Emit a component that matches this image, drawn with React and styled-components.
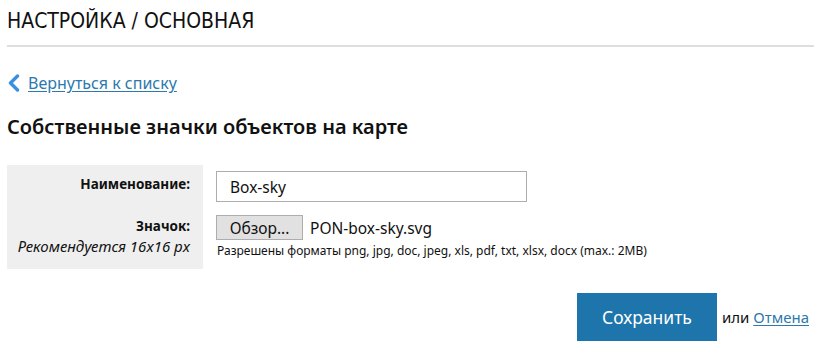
import React from "react";
import styled, { createGlobalStyle } from "styled-components";

const Global = createGlobalStyle`
  html, body { margin: 0; padding: 0; background: #fff; }
  body { font-family: "Noto Sans", "Open Sans", sans-serif; color: #111; }
`;

const Page = styled.div`
  padding: 0 1px 0 7px;
  width: 815px;
  box-sizing: border-box;
`;

const Title = styled.h1`
  margin: 0;
  padding-top: 8px;
  box-sizing: border-box;
  font-family: "Liberation Sans Narrow", "DejaVu Sans Condensed", "Liberation Sans", sans-serif;
  font-stretch: condensed;
  font-weight: 400;
  font-size: 21px;
  line-height: 26px;
  color: #111;
  border-bottom: 2px solid #dedede;
  padding-bottom: 0;
  height: 47px;
`;

const BackLink = styled.a`
  display: inline-flex;
  align-items: center;
  gap: 8px;
  margin-top: 26px;
  font-size: 16px;
  line-height: 20px;
  color: #2b79ae;
  text-decoration: underline;
  text-underline-offset: 2px;
`;

const Chevron = styled.svg`
  width: 13px;
  height: 18px;
  flex: none;
`;

const Heading = styled.h2`
  margin: 17px 0 0;
  font-size: 20px;
  line-height: 26px;
  font-weight: 600;
  color: #111;
`;

const Form = styled.div`
  display: grid;
  grid-template-columns: 196px 1fr;
  margin-top: 25px;
`;

const LabelCell = styled.div`
  background: #efefef;
  text-align: right;
  padding: ${(p) => p.$pad};
  box-sizing: border-box;
  height: ${(p) => p.$h}px;
`;

const Label = styled.div`
  font-weight: 700;
  font-size: 13.5px;
  line-height: 20px;
`;

const Hint = styled.div`
  font-style: italic;
  font-size: 15px;
  line-height: 20px;
`;

const FieldCell = styled.div`
  padding: ${(p) => p.$pad};
`;

const TextInput = styled.input`
  width: 311px;
  height: 31px;
  box-sizing: border-box;
  border: 1px solid #adadad;
  padding: 0 13px;
  font-family: inherit;
  font-size: 15.5px;
  color: #111;
  outline: none;
`;

const FileRow = styled.div`
  display: flex;
  align-items: center;
  gap: 7px;
`;

const BrowseButton = styled.button`
  height: 25px;
  width: 87px;
  box-sizing: border-box;
  background: #e1e1e1;
  border: 1px solid #adadad;
  font-family: inherit;
  font-size: 15.5px;
  line-height: 20px;
  color: #111;
  padding: 0;
`;

const FileName = styled.span`
  font-size: 15.5px;
`;

const Help = styled.div`
  font-size: 12px;
  line-height: 16px;
  margin-top: 3px;
  margin-left: 1px;
`;

const Actions = styled.div`
  display: flex;
  justify-content: flex-end;
  align-items: center;
  margin-top: 24px;
  padding-right: 5px;
  gap: 5px;
  font-size: 15px;
`;

const SaveButton = styled.button`
  width: 140px;
  height: 48px;
  background: #1d75ab;
  color: #fff;
  border: none;
  font-family: inherit;
  font-size: 17.5px;
  padding: 0;
`;

const Link = styled.a`
  color: #2b79ae;
  text-decoration: underline;
  text-underline-offset: 2px;
`;

export default function App() {
  return (
    <>
      <Global />
      <Page>
        <Title>НАСТРОЙКА / ОСНОВНАЯ</Title>
        <BackLink href="#">
          <Chevron viewBox="0 0 13 18">
            <path d="M10.5 2 L3.5 9 L10.5 16" fill="none" stroke="#3a8fe0" strokeWidth="3.4" strokeLinecap="round" strokeLinejoin="round" />
          </Chevron>
          Вернуться к списку
        </BackLink>
        <Heading>Собственные значки объектов на карте</Heading>
        <Form>
          <LabelCell $pad="9px 13px 0 0" $h={42}>
            <Label>Наименование:</Label>
          </LabelCell>
          <FieldCell $pad="6px 0 0 13px">
            <TextInput defaultValue="Box-sky" />
          </FieldCell>
          <LabelCell $pad="9px 13px 0 0" $h={62}>
            <Label>Значок:</Label>
            <Hint>Рекомендуется 16x16 px</Hint>
          </LabelCell>
          <FieldCell $pad="8px 0 0 13px">
            <FileRow>
              <BrowseButton>Обзор...</BrowseButton>
              <FileName>PON-box-sky.svg</FileName>
            </FileRow>
            <Help>Разрешены форматы png, jpg, doc, jpeg, xls, pdf, txt, xlsx, docx (max.: 2MB)</Help>
          </FieldCell>
        </Form>
        <Actions>
          <SaveButton>Сохранить</SaveButton>
          <span>
            или <Link href="#">Отмена</Link>
          </span>
        </Actions>
      </Page>
    </>
  );
}
